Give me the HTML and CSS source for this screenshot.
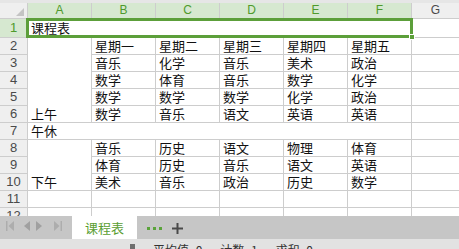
FILE: index.html
```html
<!DOCTYPE html>
<html lang="zh">
<head>
<meta charset="utf-8">
<title>课程表</title>
<link rel="stylesheet" href="styles.css">
</head>
<body>
<div class="app">
  <div class="strip"></div>
  <div class="sheet">
    <div class="grid">
      <div class="hd corner"><svg width="27" height="15" viewBox="0 0 27 15"><polygon points="24,5 24,13 16,13" fill="#c4c4c4"/></svg></div>
      <div class="hd col sel">A</div>
      <div class="hd col sel">B</div>
      <div class="hd col sel">C</div>
      <div class="hd col sel">D</div>
      <div class="hd col sel">E</div>
      <div class="hd col sel">F</div>
      <div class="hd col">G</div>

      <div class="hd row sel">1</div>
      <div class="c span6 title">课程表</div>
      <div class="c"></div>

      <div class="hd row">2</div>
      <div class="c amrow">上午</div>
      <div class="c">星期一</div><div class="c">星期二</div><div class="c">星期三</div><div class="c">星期四</div><div class="c">星期五</div><div class="c"></div>

      <div class="hd row">3</div>
      <div class="c">音乐</div><div class="c">化学</div><div class="c">音乐</div><div class="c">美术</div><div class="c">政治</div><div class="c"></div>

      <div class="hd row">4</div>
      <div class="c">数学</div><div class="c">体育</div><div class="c">音乐</div><div class="c">数学</div><div class="c">化学</div><div class="c"></div>

      <div class="hd row">5</div>
      <div class="c">数学</div><div class="c">数学</div><div class="c">数学</div><div class="c">化学</div><div class="c">政治</div><div class="c"></div>

      <div class="hd row">6</div>
      <div class="c">数学</div><div class="c">音乐</div><div class="c">语文</div><div class="c">英语</div><div class="c">英语</div><div class="c"></div>

      <div class="hd row">7</div>
      <div class="c span6">午休</div>
      <div class="c"></div>

      <div class="hd row">8</div>
      <div class="c pmrow">下午</div>
      <div class="c">音乐</div><div class="c">历史</div><div class="c">语文</div><div class="c">物理</div><div class="c">体育</div><div class="c"></div>

      <div class="hd row">9</div>
      <div class="c">体育</div><div class="c">历史</div><div class="c">音乐</div><div class="c">语文</div><div class="c">英语</div><div class="c"></div>

      <div class="hd row">10</div>
      <div class="c">美术</div><div class="c">音乐</div><div class="c">政治</div><div class="c">历史</div><div class="c">数学</div><div class="c"></div>

      <div class="hd row">11</div>
      <div class="c"></div><div class="c"></div><div class="c"></div><div class="c"></div><div class="c"></div><div class="c"></div><div class="c"></div>

      <div class="hd row">12</div>
      <div class="c"></div><div class="c"></div><div class="c"></div><div class="c"></div><div class="c"></div><div class="c"></div><div class="c"></div>
    </div>
    <div class="selection"><span class="handle"></span></div>
  </div>
  <div class="tabbar">
    <div class="nav">
      <svg width="72" height="23" viewBox="0 0 72 23">
        <rect x="6" y="9" width="1.5" height="10" fill="#adadad"/>
        <polygon points="14,9 14,19 8.5,14" fill="#adadad"/>
        <polygon points="30,9 30,19 24,14" fill="#a0a0a0"/>
        <polygon points="36,9 36,19 42,14" fill="#a0a0a0"/>
        <polygon points="54,9 54,19 59.5,14" fill="#adadad"/>
        <rect x="60.5" y="9" width="1.5" height="10" fill="#adadad"/>
      </svg>
    </div>
    <div class="tab">课程表</div>
    <div class="more"><span></span><span></span><span></span></div>
    <div class="add">
      <svg width="11" height="11" viewBox="0 0 11 11"><rect x="0" y="4.5" width="11" height="2" fill="#4a4a4a"/><rect x="4.5" y="0" width="2" height="11" fill="#4a4a4a"/></svg>
    </div>
  </div>
  <div class="status">
    <span class="sicon"></span>
    <span class="stext">平均值=0</span>
    <span class="stext">计数=1</span>
    <span class="stext">求和=0</span>
  </div>
</div>
</body>
</html>
```
FILE: styles.css
```css
* { box-sizing: border-box; }
html, body { margin: 0; padding: 0; }
body {
  width: 459px;
  height: 249px;
  overflow: hidden;
  background: #ffffff;
  font-family: "Noto Sans CJK SC", "Liberation Sans", sans-serif;
}
.app {
  display: flex;
  flex-direction: column;
  width: 459px;
  height: 249px;
}
.strip {
  height: 3px;
  background: #e6e6e6;
  flex: none;
}
.sheet {
  position: relative;
  height: 213px;
  overflow: hidden;
  flex: none;
}
.grid {
  display: grid;
  grid-template-columns: 27px repeat(6, 63px) 1fr;
  grid-template-rows: 15px 18px repeat(11, 16px);
  gap: 1px;
  background: #cdcdcd;
  width: 459px;
}
.hd {
  background: #efefef;
  color: #4a4a4a;
  display: flex;
  align-items: center;
  justify-content: center;
  font-family: "Liberation Sans", Arial, sans-serif;
}
.hd.col { font-size: 12px; line-height: 15px; }
.hd.row { font-size: 13px; line-height: 16px; }
.hd.sel {
  background: #d6e8d0;
  color: #4f9a2c;
}
.corner { padding: 0; }
.corner svg { display: block; }
.c {
  background: #ffffff;
  color: #111111;
  font-size: 13px;
  line-height: 16px;
  padding: 0 0 0 3px;
  display: flex;
  align-items: flex-end;
  white-space: nowrap;
}
.span6 { grid-column: span 6; }
.title { padding-left: 3px; padding-bottom: 1px; }
.amrow { grid-row: span 5; }
.pmrow { grid-row: span 3; }
.selection {
  position: absolute;
  left: 26px;
  top: 15px;
  width: 387px;
  height: 20px;
  border: 3px solid #5c9f3a;
  pointer-events: none;
}
.handle {
  position: absolute;
  right: -5px;
  bottom: -5px;
  width: 6px;
  height: 6px;
  background: #5c9f3a;
  border: 1px solid #ffffff;
}
.tabbar {
  display: flex;
  align-items: stretch;
  height: 23px;
  background: #c6c6c6;
  flex: none;
}
.nav { width: 72px; flex: none; }
.nav svg { display: block; margin-top: -4px; }
.tab {
  width: 65px;
  flex: none;
  background: #ffffff;
  color: #5a9e32;
  font-size: 13px;
  display: flex;
  align-items: center;
  justify-content: center;
  line-height: 23px;
}
.more {
  display: flex;
  align-items: center;
  gap: 3px;
  margin-left: 10px;
}
.more span {
  width: 3px;
  height: 3px;
  background: #5aa33a;
  margin-top: 1px;
}
.add {
  display: flex;
  align-items: center;
  margin-left: 10px;
  padding-top: 1px;
}
.add svg { display: block; }
.status {
  height: 10px;
  background: #e2e2e2;
  overflow: hidden;
  display: flex;
  align-items: flex-start;
  padding-left: 130px;
  gap: 18px;
  flex: none;
}
.sicon {
  width: 5px;
  height: 6px;
  background: #6f6f6f;
  margin-top: 5px;
  flex: none;
}
.stext {
  font-size: 12px;
  line-height: 16px;
  color: #333333;
  margin-top: 3px;
}
```
